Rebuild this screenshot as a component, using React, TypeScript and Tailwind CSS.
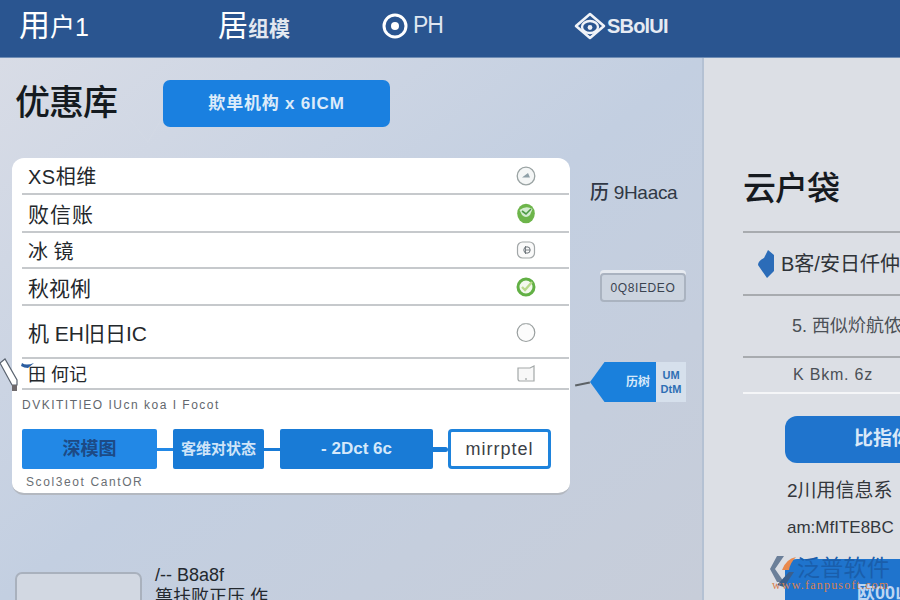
const sans = "[font-family:'Liberation_Sans','Noto_Sans_CJK_SC',sans-serif]";

function RoundIcon({ kind }: { kind: string }) {
  if (kind === "tri")
    return (
      <svg width="20" height="20" viewBox="0 0 20 20">
        <circle cx="10" cy="10" r="8.8" fill="#f4f6f6" stroke="#9aa3a3" strokeWidth="1.3" />
        <path d="M6 11.5 L12 7 L14 11.5 Z" fill="#8fa0a8" />
      </svg>
    );
  if (kind === "green")
    return (
      <svg width="20" height="21" viewBox="0 0 20 21">
        <ellipse cx="10" cy="10.5" rx="8.8" ry="9.8" fill="#6db54a" />
        <path d="M3.5 7 Q10 2 16.5 6 L14 12 Q10 16 6 12 Z" fill="#d4ecd0" />
        <path d="M6 8 L10 11 L15 6" stroke="#4d9a45" strokeWidth="1.6" fill="none" />
      </svg>
    );
  if (kind === "square")
    return (
      <svg width="20" height="20" viewBox="0 0 20 20">
        <rect x="1.5" y="2" width="17" height="16" rx="5" fill="#fafafa" stroke="#a2a7a8" strokeWidth="1.2" />
        <circle cx="11" cy="10" r="3.2" fill="none" stroke="#6b7378" strokeWidth="1" />
        <path d="M9.5 6 V14 M9.5 10 H14" stroke="#6b7378" strokeWidth="0.9" />
      </svg>
    );
  if (kind === "ring")
    return (
      <svg width="20" height="20" viewBox="0 0 20 20">
        <circle cx="10" cy="10" r="8" fill="#f3f8ee" stroke="#62b045" strokeWidth="3" />
        <path d="M6 10 L9 13 L16 5" stroke="#b8d98a" strokeWidth="2.4" fill="none" />
      </svg>
    );
  if (kind === "open")
    return (
      <svg width="20" height="22" viewBox="0 0 20 22">
        <ellipse cx="10" cy="11.5" rx="8.8" ry="9" fill="#fcfcfc" stroke="#999f9f" strokeWidth="1.2" />
        <path d="M5 3.5 Q10 1.5 15 3.5" stroke="#b5baba" fill="none" />
      </svg>
    );
  return (
    <svg width="20" height="20" viewBox="0 0 20 20">
      <path d="M2 4 H14 L18 2 V17 H4 Q2 17 2 15 Z" fill="#f8f8f8" stroke="#a3a8a8" strokeWidth="1.2" />
      <path d="M10 14 V16" stroke="#8a9090" />
    </svg>
  );
}

const rows = [
  { label: "XS相维", icon: "tri", h: "h-[37px]", size: "text-[20px] tracking-[0.5px]" },
  { label: "败信账", icon: "green", h: "h-[38px]", size: "text-[21px] tracking-[1px]" },
  { label: "冰 镜", icon: "square", h: "h-[36px]", size: "text-[20px]" },
  { label: "秋视俐", icon: "ring", h: "h-[37px]", size: "text-[21px]" },
  { label: "机 EH旧日IC", icon: "open", h: "h-[53px]", size: "text-[21px]" },
  { label: "田 何记", icon: "note", h: "h-[31px]", size: "text-[18px]" },
];

export default function App() {
  return (
    <div className={`relative flex h-[600px] w-[900px] flex-col overflow-hidden bg-[#dcdfe5] whitespace-nowrap ${sans}`}>
      <header className="flex h-[58px] shrink-0 items-center border-b border-[#6f8db5] bg-[#2a5590] pb-[6px] pl-[19px] text-white">
        <div className="w-[199px] text-[31px] leading-none">
          用<span className="text-[25px]">户1</span>
        </div>
        <div className="flex w-[163px] items-baseline">
          <span className="text-[30px] leading-none">居</span>
          <span className="text-[21px] font-bold leading-none text-[#e3e8f0]">组模</span>
        </div>
        <div className="flex w-[193px] items-center gap-[4px]">
          <svg width="28" height="28" viewBox="0 0 28 28">
            <circle cx="14" cy="14" r="11" fill="none" stroke="#fff" strokeWidth="3" />
            <circle cx="14" cy="14" r="4" fill="#fff" />
          </svg>
          <span className="text-[23px] leading-none tracking-[-1px] text-[#dfe6f0]">PH</span>
        </div>
        <div className="flex items-center gap-[1px]">
          <svg width="32" height="28" viewBox="0 0 32 28">
            <path d="M16 2 L30 14 L16 26 L2 14 Z" fill="none" stroke="#f0f3f8" strokeWidth="2.6" strokeLinejoin="round" />
            <ellipse cx="16" cy="15" rx="8" ry="6" fill="none" stroke="#f0f3f8" strokeWidth="2.4" />
            <circle cx="16" cy="15.5" r="2.4" fill="#f0f3f8" />
          </svg>
          <span className="text-[20px] font-bold leading-none tracking-[-0.8px] text-[#e6ebf3]">SBolUI</span>
        </div>
      </header>

      <div className="flex min-h-0 flex-1">
        <main className="flex w-[702px] shrink-0 flex-col bg-gradient-to-br from-[#d8dce6] via-[#c3cfe1] to-[#c7cdd9] pl-[12px]">
          <div className="relative flex h-[100px] shrink-0 items-start pt-[22px]">
            <h1 className="w-[151px] pl-[3px] text-[35px] font-medium leading-[46px] tracking-[-1px] text-[#141a20]">优惠库</h1>
            <button className="flex h-[47px] w-[227px] items-center justify-center rounded-[7px] bg-[#1a80e0] text-[17px] font-bold tracking-[0.8px] text-[#dcebfa]">
              欺单机构 x 6ICM
            </button>
            <svg className="absolute left-[108px] top-[50px]" width="50" height="40" viewBox="0 0 50 40">
              <path d="M4 4 L28 34 L42 10 M18 0 L12 12" stroke="#d3d9e4" strokeWidth="0.8" fill="none" />
            </svg>
          </div>

          <div className="flex">
            <section className="relative flex h-[337px] w-[558px] shrink-0 flex-col rounded-[12px] border-b-2 border-b-[#b3b8c0] bg-white pl-[10px] pr-[1px]">
              {rows.map((r) => (
                <div key={r.label} className={`flex ${r.h} shrink-0 items-center justify-between border-b-2 border-[#c6c9cc] pl-[6px] pr-[33px]`}>
                  <span className={`${r.size} pt-[3px] leading-none text-[#24282c]`}>{r.label}</span>
                  <RoundIcon kind={r.icon} />
                </div>
              ))}
              <p className="mt-[8px] h-[17px] text-[12px] leading-[14px] tracking-[1.5px] text-[#62676d]">DVKITITIEO IUcn koa I Focot</p>
              <div className="mt-[14px] flex h-[40px] items-center">
                <div className="flex h-full w-[135px] items-center justify-center rounded-[2px] bg-[#2288e6] text-[18px] font-bold text-[#1d4a85]">深模图</div>
                <div className="h-[3px] w-[16px] bg-[#2288e6]" />
                <div className="flex h-full w-[91px] items-center justify-center rounded-[2px] bg-[#197bd6] text-[15px] font-bold text-[#cfe4f8]">客维对状态</div>
                <div className="h-[3px] w-[16px] bg-[#197bd6]" />
                <div className="flex h-full w-[153px] items-center justify-center rounded-[2px] bg-[#197bd6] text-[17px] font-bold text-[#d5e8fa]">- 2Dct 6c</div>
                <div className="h-[5px] w-[15px] rounded-r-full bg-[#197bd6]" />
                <div className="flex h-full w-[103px] items-center justify-center rounded-[4px] border-[3px] border-[#1e83dc] bg-white text-[18px] tracking-[1px] text-[#3b4046]">mirrptel</div>
              </div>
              <p className="mt-[5px] pl-[4px] text-[12px] leading-[16px] tracking-[1.6px] text-[#6a6f74]">Scol3eot CantOR</p>

              <svg className="absolute left-[-12px] top-[197px]" width="40" height="38" viewBox="0 0 40 38">
                <path d="M0 8 L5 4 L17 25 L17 30 L12 30 Z" fill="#fff" stroke="#5b6470" strokeWidth="1.2" />
                <rect x="12" y="30" width="5" height="6" fill="#6f6a6c" />
                <path d="M22 8 Q26 11 34 8 L28 13 Q24 13 21 11 Z" fill="#2a5da0" />
              </svg>
            </section>

            <aside className="relative flex flex-col pl-[20px] pt-[23px]">
              <div className="text-[19px] font-medium leading-[24px] tracking-[-0.3px] text-[#303845]">历 9Haaca</div>
              <div className="ml-[10px] mt-[68px] flex h-[29px] w-[86px] items-center justify-center rounded-[4px] border-2 border-[#aab3c0] bg-[#ccd4df] text-[12px] tracking-[0.6px] text-[#3a4350] shadow-[0_-3px_0_#e6eaf0]">
                0Q8IEDEO
              </div>
              <div className="mt-[60px] flex h-[40px] items-stretch">
                <div className="flex w-[66px] items-center justify-end bg-[#1a80dc] pr-[6px] text-[12px] font-bold text-[#d5e8fa] [clip-path:polygon(22%_0,100%_0,100%_100%,22%_100%,0_50%)]">
                  历树
                </div>
                <div className="flex w-[30px] flex-col justify-center bg-[#d6e0ec] text-center text-[11px] font-bold leading-[14px] text-[#2e6fb4]">
                  <span>UM</span>
                  <span>DtM</span>
                </div>
              </div>
              <div className="absolute left-[5px] top-[225px] h-[2px] w-[15px] rotate-[-12deg] bg-[#5d6266]" />
            </aside>
          </div>

          <div className="flex pl-[3px] pt-[77px]">
            <div className="h-[60px] w-[127px] shrink-0 rounded-[7px] border-2 border-[#a9b1bd] bg-[#d2d8e2]" />
            <div className="-mt-[7px] pl-[13px] text-[#23282e]">
              <p className="text-[18px] leading-[20px]">/-- B8a8f</p>
              <p className="text-[18px] leading-[24px]">箅拤败正压 作</p>
            </div>
          </div>
        </main>

        <aside className="flex min-w-0 flex-1 flex-col border-l-2 border-[#b4c1d3] pl-[39px] text-[#2f3338]">
          <h2 className="h-[173px] shrink-0 pt-[109px] text-[33px] font-medium leading-[44px] tracking-[-1px] text-[#161a1f]">云户袋</h2>
          <div className="flex h-[65px] shrink-0 items-center gap-[5px] border-y-2 border-[#a8abaf] pl-[13px] text-[20px] leading-none">
            <svg className="shrink-0" width="20" height="30" viewBox="0 0 20 30">
              <path d="M12 1 L18 6 L18 22 L11 29 L2 16 Q2 12 8 9 Z" fill="#2b6cb8" />
            </svg>
            <span>B客/安日仟仲</span>
          </div>
          <div className="flex h-[62px] shrink-0 items-center border-b-2 border-[#a8abaf] pl-[49px] text-[18px] leading-none text-[#4b5056]">
            5. 西似炌航侬
          </div>
          <div className="flex h-[36px] shrink-0 items-center border-b-2 border-[#f5f6f8] pl-[50px] text-[16px] leading-none tracking-[0.8px] text-[#4b5056]">
            K Bkm. 6z
          </div>
          <div className="ml-[42px] mt-[22px] flex h-[47px] w-[200px] shrink-0 items-center rounded-l-[12px] bg-[#1f74cd] pl-[69px] text-[19px] font-bold text-[#d9e8f8]">
            比指你
          </div>
          <p className="ml-[44px] mt-[16px] text-[19px] leading-[24px] text-[#33373c]">2川用信息系</p>
          <p className="ml-[44px] mt-[13px] text-[17px] leading-[24px] text-[#33373c]">am:MfITE8BC</p>
          <div className="ml-[42px] mt-[19px] flex h-[60px] w-[200px] shrink-0 items-end rounded-l-[12px] bg-[#1f74cd] pb-[17px] pl-[72px] text-[18px] font-bold leading-none text-[#bcd6f2]">
            欧00山
          </div>
        </aside>
      </div>

      {/* watermark */}
      <div className="absolute left-[770px] top-[555px]">
        <div className="flex items-start">
          <svg width="27" height="34" viewBox="0 0 27 34">
            <path d="M7 1 H14 L5 14 L14 27 H7 L0 14 Z" fill="#6b7f99" />
            <path d="M12 15 Q16 4 26 2 Q20 8 19 15 Z" fill="#e98a4e" />
            <path d="M7 30 L19 17 L24 17 L14 32 Z" fill="#3b5f8c" />
          </svg>
          <div className="text-[23px] leading-[26px] tracking-[0.3px] text-[#1a5eab]">泛普软件</div>
        </div>
        <div className="-mt-[10px] ml-[2px] [font-family:'Liberation_Serif',serif] text-[12px] leading-[13px] tracking-[1.2px] text-[#d9814f]">www.fanpusoft.com</div>
      </div>
    </div>
  );
}
